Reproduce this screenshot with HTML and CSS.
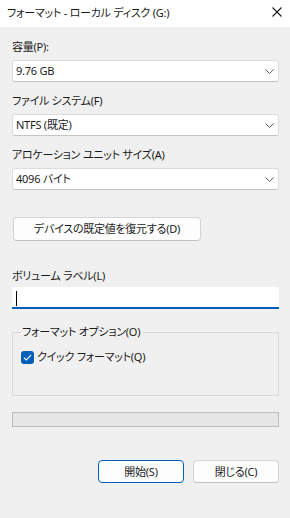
FILE: index.html
```html
<!DOCTYPE html>
<html lang="ja">
<head>
<meta charset="utf-8">
<title>フォーマット</title>
<link rel="stylesheet" href="styles.css">
</head>
<body>
<div class="window">
  <div class="titlebar">
    <span class="title">フォーマット - ローカル ディスク (G:)</span>
    <svg class="close" width="10" height="10" viewBox="0 0 10 10"><path d="M0.5 0.5 L9.5 9.5 M9.5 0.5 L0.5 9.5" stroke="#1a1a1a" stroke-width="1.1" fill="none"/></svg>
  </div>
  <div class="content">
    <div class="label">容量(P):</div>
    <div class="combo"><span>9.76 GB</span><svg class="chev" width="9" height="5" viewBox="0 0 9 5"><path d="M0.5 0.5 L4.5 4.5 L8.5 0.5" stroke="#5f5f5f" stroke-width="1" fill="none"/></svg></div>

    <div class="label gap">ファイル システム(F)</div>
    <div class="combo"><span>NTFS (既定)</span><svg class="chev" width="9" height="5" viewBox="0 0 9 5"><path d="M0.5 0.5 L4.5 4.5 L8.5 0.5" stroke="#5f5f5f" stroke-width="1" fill="none"/></svg></div>

    <div class="label gap">アロケーション ユニット サイズ(A)</div>
    <div class="combo"><span>4096 バイト</span><svg class="chev" width="9" height="5" viewBox="0 0 9 5"><path d="M0.5 0.5 L4.5 4.5 L8.5 0.5" stroke="#5f5f5f" stroke-width="1" fill="none"/></svg></div>

    <div class="restore-row"><div class="btn restore">デバイスの既定値を復元する(D)</div></div>

    <div class="label vol">ボリューム ラベル(L)</div>
    <div class="textbox"><span class="caret"></span></div>

    <fieldset class="group">
      <legend>フォーマット オプション(O)</legend>
      <div class="check-row">
        <span class="checkbox"><svg width="9" height="7" viewBox="0 0 9 7"><path d="M0.8 3.6 L3.3 6 L8.2 0.9" stroke="#ffffff" stroke-width="1.1" fill="none"/></svg></span>
        <span class="check-label">クイック フォーマット(Q)</span>
      </div>
    </fieldset>

    <div class="progress"></div>

    <div class="actions">
      <div class="btn action primary">開始(S)</div>
      <div class="btn action">閉じる(C)</div>
    </div>
  </div>
</div>
</body>
</html>
```
FILE: styles.css
```css
* { box-sizing: border-box; }
html, body { margin: 0; padding: 0; }
body {
  width: 290px;
  height: 518px;
  background: #f0f0f0;
  font-family: "Noto Sans", "Noto Sans CJK JP", sans-serif;
  font-size: 11px;
  font-weight: 400;
  letter-spacing: -0.25px;
  color: #1b1b1b;
  font-feature-settings: "palt";
}
.window {
  width: 290px;
  height: 518px;
  background: #f0f0f0;
  display: flex;
  flex-direction: column;
}
.titlebar {
  height: 27px;
  background: #ffffff;
  display: flex;
  align-items: center;
  justify-content: space-between;
  padding: 0 8px 2px 7px;
}
.title { line-height: 16px; }
.close { display: block; margin-top: -2px; }
.content {
  padding: 12px 11px 0 12px;
  display: flex;
  flex-direction: column;
}
.label {
  line-height: 16px;
  height: 16px;
  margin-bottom: 5px;
}
.label.gap { margin-top: 11px; }
.combo {
  height: 22px;
  background: #ffffff;
  border: 1px solid #dcdcdc;
  border-bottom-color: #c4c4c4;
  border-radius: 3px;
  display: flex;
  align-items: center;
  justify-content: space-between;
  padding: 0 4px 0 3px;
  line-height: 16px;
}
.chev { display: block; }
.restore-row {
  margin-top: 27px;
  padding-left: 1px;
  display: flex;
}
.btn {
  background: #fdfdfd;
  border: 1px solid #d3d3d3;
  border-bottom-color: #c2c2c2;
  border-radius: 4px;
  display: flex;
  align-items: center;
  justify-content: center;
  line-height: 16px;
}
.restore {
  width: 188px;
  height: 24px;
}
.label.vol {
  margin-top: 27px;
  margin-bottom: 3px;
}
.textbox {
  height: 22px;
  background: #ffffff;
  border-bottom: 2px solid #005fb8;
  border-radius: 2px 2px 0 0;
  display: flex;
  align-items: center;
  padding-left: 4px;
}
.caret {
  width: 1px;
  height: 15px;
  background: #000000;
  margin-top: 2px;
}
.group {
  margin: 15px 0 0 0;
  padding: 0 8px 0 8px;
  height: 72px;
  border: 1px solid #dadada;
  border-radius: 0;
}
.group legend {
  padding: 0 3px 0 1px;
  margin-left: 0;
  line-height: 16px;
}
.check-row {
  display: flex;
  align-items: center;
  margin-top: 9px;
}
.checkbox {
  width: 13px;
  height: 13px;
  background: #005fb8;
  border-radius: 3px;
  display: flex;
  align-items: center;
  justify-content: center;
  margin-right: 3px;
}
.checkbox svg { display: block; }
.check-label { line-height: 16px; }
.progress {
  margin-top: 16px;
  height: 15px;
  background: #e6e6e6;
  border: 1px solid #bcbcbc;
}
.actions {
  margin-top: 33px;
  display: flex;
  justify-content: flex-end;
  gap: 9px;
}
.action {
  width: 86px;
  height: 23px;
}
.action.primary {
  border: 1px solid #005fb8;
}
```
